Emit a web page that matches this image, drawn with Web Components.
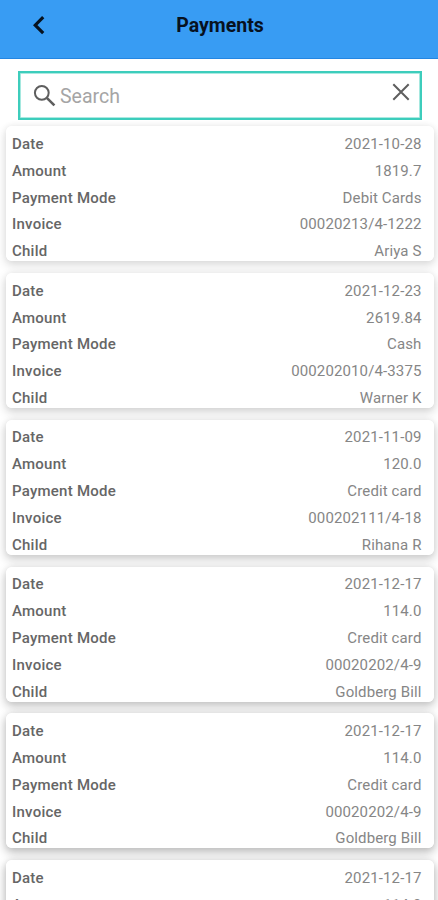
<!DOCTYPE html>
<html lang="en">
<head>
<meta charset="utf-8">
<title>Payments</title>
<style>
html, body { margin: 0; height: 100%; overflow: hidden; }
body { background: #fff; font-family: Roboto, "Liberation Sans", sans-serif; }
</style>
</head>
<body>
<payments-screen></payments-screen>
<script>
class AppHeader extends HTMLElement {
  constructor() {
    super();
    this.attachShadow({ mode: 'open' }).innerHTML = `
      <style>
        :host { display: grid; grid-template-columns: 70px 1fr 70px; height: 59px; box-sizing: border-box;
          background: #389cf3; border-bottom: 1.5px solid #2486e2; color: #07121f; }
        svg { display: block; width: 12px; height: 19px; margin: 16px 0 0 33px; }
        h1 { margin: 0; text-align: center; font-size: 19.5px; line-height: 24px; font-weight: 700; padding: 14px 0 0 2px; }
      </style>
      <svg viewBox="0 0 12 19"><path d="M10.2 1.2 2.2 9.2l8 8" fill="none" stroke="#07121f" stroke-width="3.2"/></svg>
      <h1><slot></slot></h1>`;
  }
}
class SearchField extends HTMLElement {
  constructor() {
    super();
    this.attachShadow({ mode: 'open' }).innerHTML = `
      <style>
        :host { display: flex; box-sizing: border-box; height: 49px; margin: 12px 16px 0 18px; padding: 0 9px 0 13px;
          border: 2px solid #3dcdbc; box-shadow: inset 0 0 0 .8px #8fe3d8; background: #fff; align-items: flex-start; }
        .lens { width: 23px; height: 23px; margin-top: 11px; }
        .text { flex: 1; font-size: 19.5px; line-height: 24px; margin: 12px 0 0 4px; color: #a5a5a5; }
        .clear { width: 18px; height: 18px; margin: 10px 1px 0 0; }
        svg { display: block; fill: none; stroke: #5e5e5e; }
      </style>
      <svg class="lens" viewBox="0 0 23 23"><circle cx="8.8" cy="8.8" r="6.9" stroke-width="2"/><path d="m13.8 13.8 7.6 7.6" stroke-width="2.6"/></svg>
      <span class="text"><slot></slot></span>
      <svg class="clear" viewBox="0 0 18 18"><path d="m1.3 1.3 15.4 15.4m0-15.4L1.3 16.7" stroke-width="2"/></svg>`;
  }
}
class PaymentRow extends HTMLElement {
  constructor() {
    super();
    this.attachShadow({ mode: 'open' }).innerHTML = `
      <style>
        :host { display: flex; justify-content: space-between; height: 26.85px; line-height: 20px; font-size: 15px; }
        .label { color: #666; font-weight: 500; letter-spacing: .24px; }
        .value { color: #868686; letter-spacing: .12px; }
      </style>
      <span class="label"><slot name="label"></slot></span><span class="value"><slot></slot></span>`;
  }
}
class PaymentCard extends HTMLElement {
  constructor() {
    super();
    this.attachShadow({ mode: 'open' });
  }
  connectedCallback() {
    const labels = ['Date', 'Amount', 'Payment Mode', 'Invoice', 'Child'];
    const values = this.getAttribute('values').split('|');
    this.shadowRoot.innerHTML = `
      <style>
        :host { display: block; position: relative; box-sizing: border-box; height: 135px; padding: 7.6px 12.5px 0 6px;
          background: #fff; border-radius: 6px; flex: none; }
        :host::before { content: ""; position: absolute; inset: 0; z-index: -1; border-radius: 6px;
          box-shadow: 0 4px 10px 1px rgba(0,0,0,var(--shade)), 0 0 6px rgba(0,0,0,.06); }
      </style>` + labels.map((l, i) => `<payment-row><span slot="label">${l}</span>${values[i]}</payment-row>`).join('');
  }
}
class PaymentsScreen extends HTMLElement {
  constructor() {
    super();
    const data = [
      '2021-10-28|1819.7|Debit Cards|00020213/4-1222|Ariya S',
      '2021-12-23|2619.84|Cash|000202010/4-3375|Warner K',
      '2021-11-09|120.0|Credit card|000202111/4-18|Rihana R',
      '2021-12-17|114.0|Credit card|00020202/4-9|Goldberg Bill',
      '2021-12-17|114.0|Credit card|00020202/4-9|Goldberg Bill',
      '2021-12-17|114.0|Credit card|00020202/4-9|Goldberg Bill'
    ];
    const shade = [.12, .15, .18, .21, .24, .26];
    this.attachShadow({ mode: 'open' }).innerHTML = `
      <style>
        :host { display: block; height: 100vh; overflow: hidden; }
        app-header, search-field { position: relative; z-index: 1; }
        .list { display: flex; flex-direction: column; gap: 11.8px; padding: 6.3px 4px 0 6px; isolation: isolate; }
      </style>
      <app-header>Payments</app-header>
      <search-field>Search</search-field>
      <div class="list">${data.map((v, i) => `<payment-card values="${v}" style="--shade:${shade[i]}"></payment-card>`).join('')}</div>`;
  }
}
customElements.define('app-header', AppHeader);
customElements.define('search-field', SearchField);
customElements.define('payment-row', PaymentRow);
customElements.define('payment-card', PaymentCard);
customElements.define('payments-screen', PaymentsScreen);
</script>
</body>
</html>
